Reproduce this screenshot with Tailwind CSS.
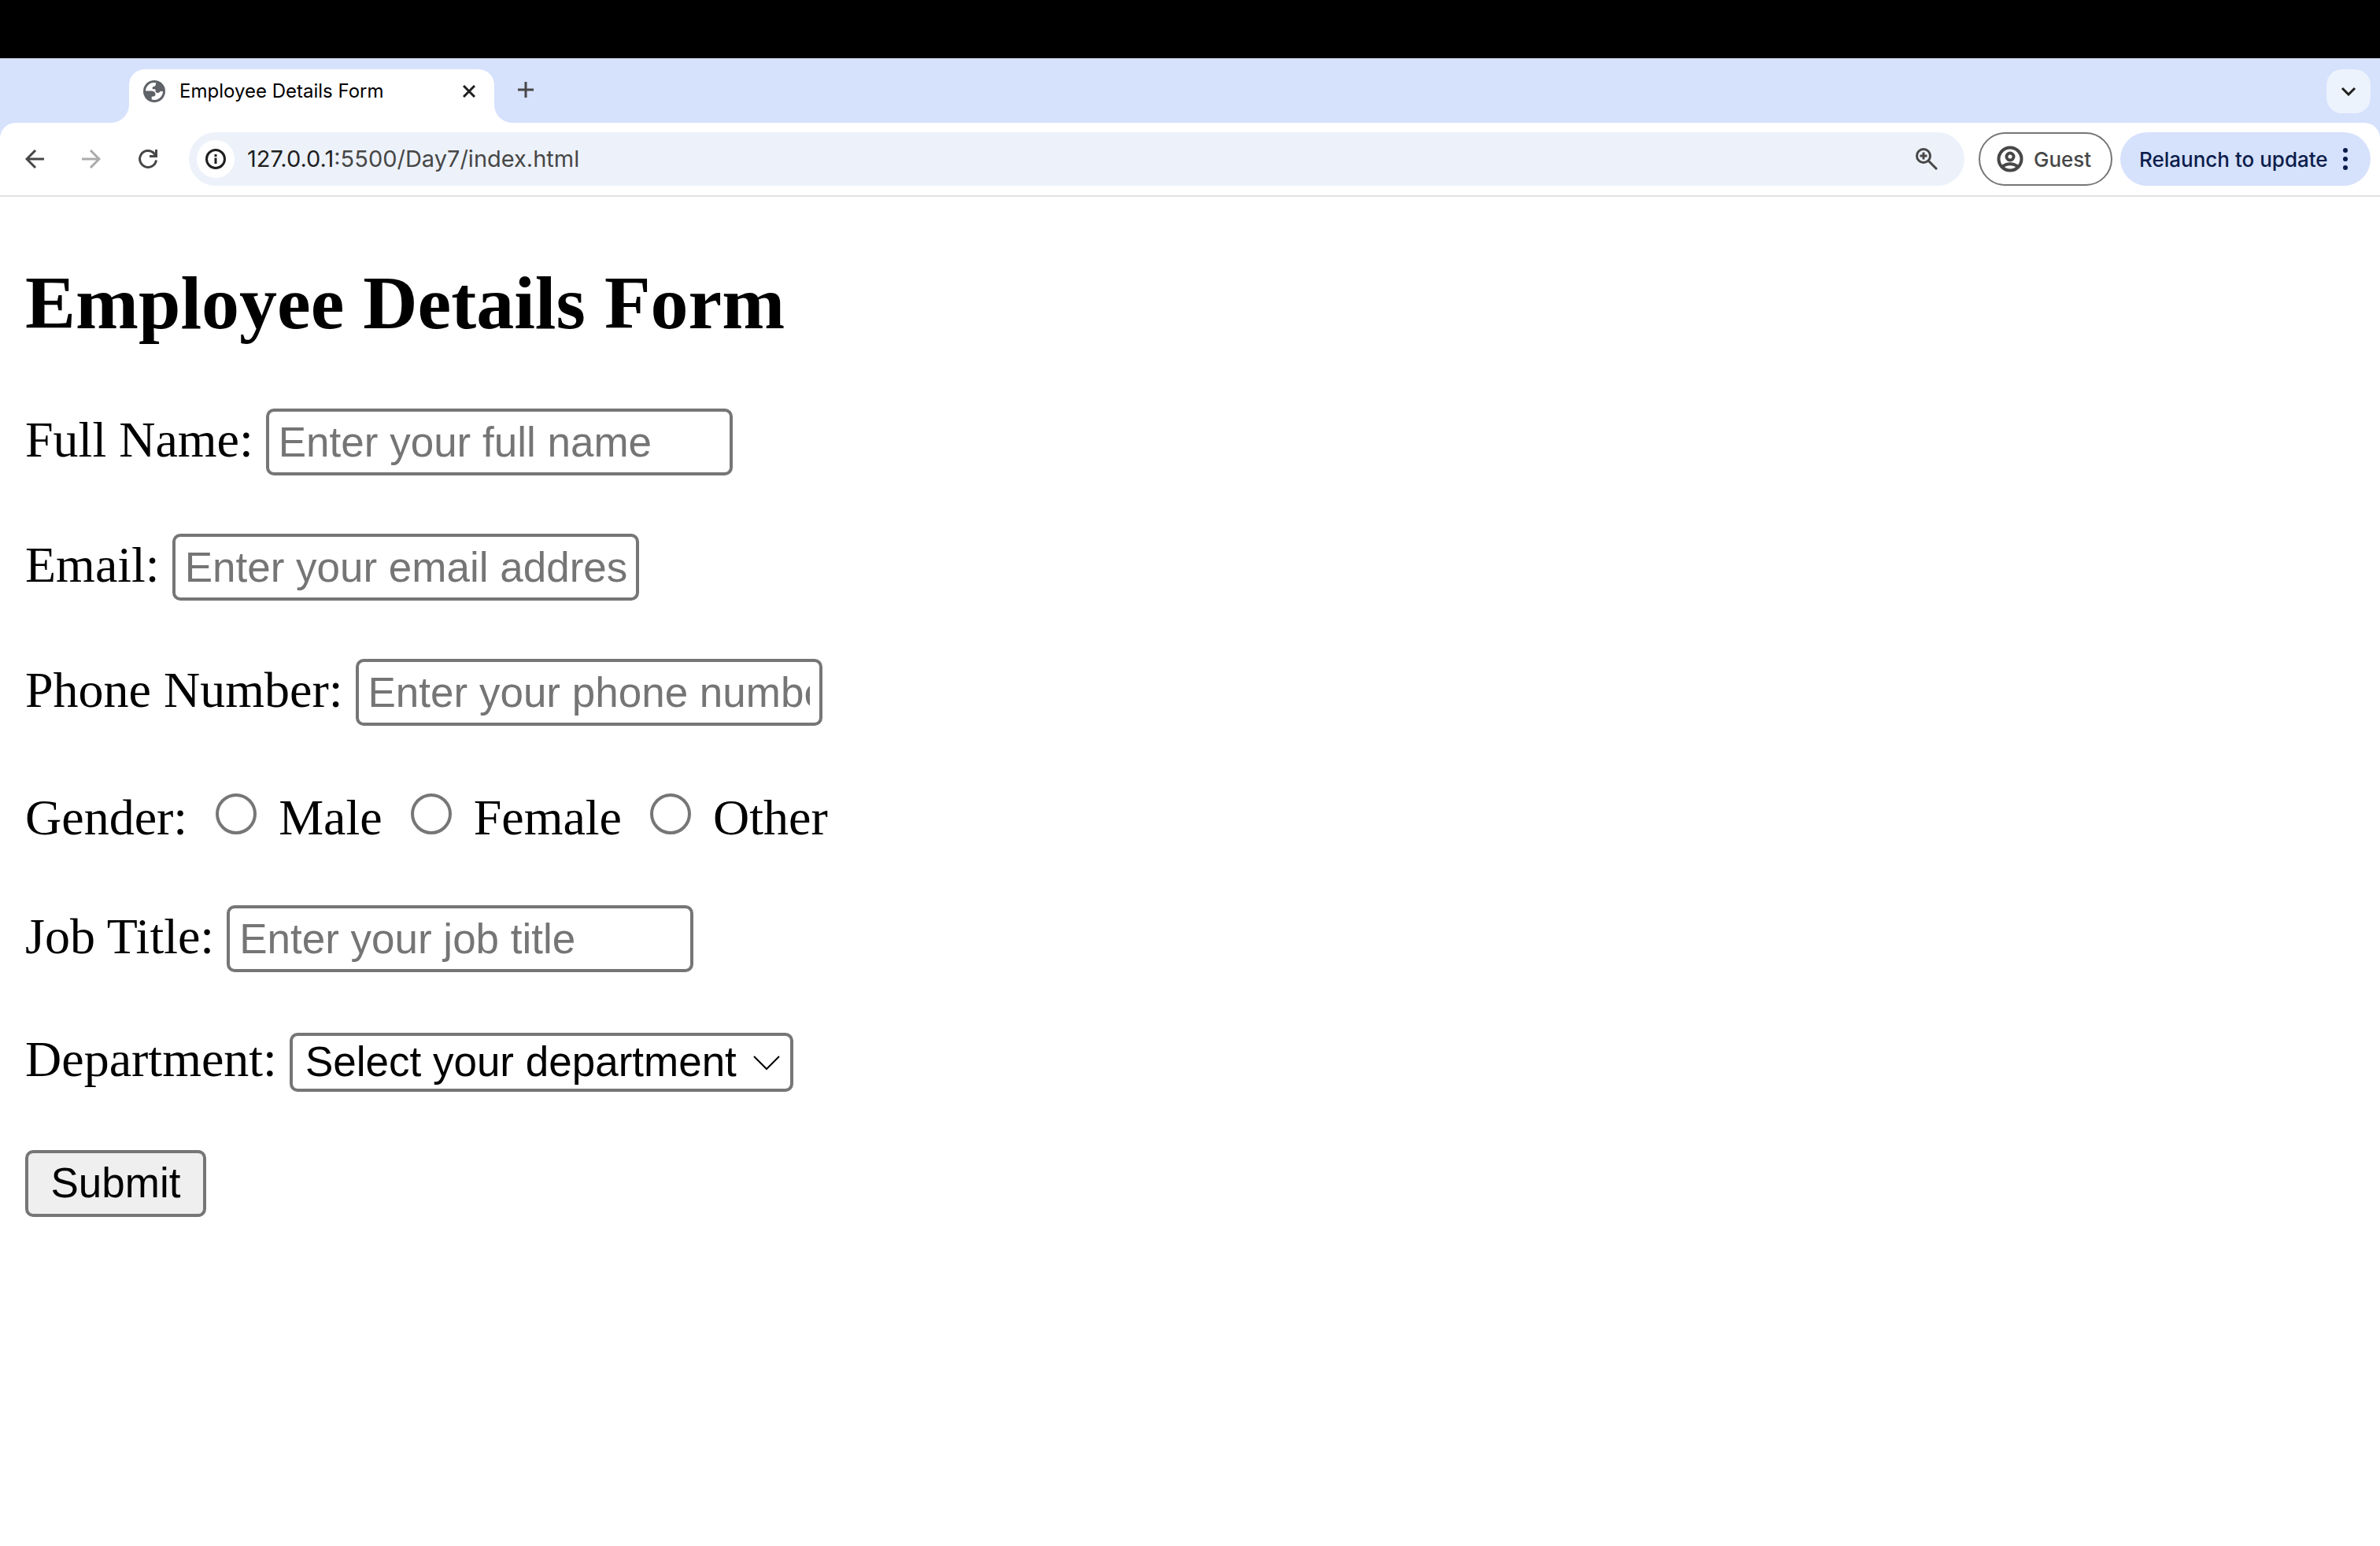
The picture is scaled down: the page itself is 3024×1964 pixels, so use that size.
<!DOCTYPE html>
<html lang="en">
<head>
<meta charset="utf-8">
<title>Employee Details Form</title>
<script src="https://cdn.jsdelivr.net/npm/@tailwindcss/browser@4"></script>
</head>
<body class="bg-white text-black">
<div class="flex min-h-screen flex-col">
  <div class="h-[74px] bg-black"></div>

  <header class="bg-[#d6e1fc] font-['Inter',sans-serif]">
    <div class="flex h-[82px] items-end pl-[140px] pr-3">
      <svg class="size-6 shrink-0" viewBox="0 0 24 24" fill="#fff" aria-hidden="true"><path d="M24 0v24H0C14 24 24 14 24 0z"/></svg>
      <div class="flex h-[68px] w-[464px] items-center rounded-t-[20px] bg-white pb-3 pl-4 pr-4">
        <svg class="size-8 shrink-0" viewBox="0 0 32 32" aria-hidden="true"><circle cx="16" cy="16" r="14" fill="#5f6368"/><path fill="#fff" d="M5 15.500C5.300 10 9.500 5.500 15 5h3v1.500c0 2.500-1.500 3.500-3.300 3.500l-1 1v2.300h3.200c.6 0 .6 1 .6 2.200 0 1.700 1.300 2.500 2.700 2.500 2 0 3-.8 3.300-2H27c0 6-5 11-11 11-1.200 0-2.300-.2-3.300-.5v-3.800c3.300 0 4.800-.6 4.800-2.700 0-2.800-1.500-4.200-4.500-4.500z"/></svg>
        <span class="ml-4 flex-1 text-2xl">Employee Details Form</span>
        <button class="flex size-8 items-center justify-center" aria-label="Close tab"><svg class="size-4" viewBox="0 0 16 16" fill="none" stroke="#1f1f1f" stroke-width="3"><path d="M1 1l14 14M15 1L1 15"/></svg></button>
      </div>
      <svg class="size-6 shrink-0" viewBox="0 0 24 24" fill="#fff" aria-hidden="true"><path d="M0 0v24h24C10 24 0 14 0 0z"/></svg>
      <button class="mb-[26px] flex size-8 items-center justify-center" aria-label="New tab"><svg class="size-5" viewBox="0 0 20 20" fill="none" stroke="#474747" stroke-width="3"><path d="M10 0v20M0 10h20"/></svg></button>
      <button class="mb-3 ml-auto flex size-14 items-center justify-center rounded-[20px] bg-[#ecf3fd]" aria-label="Search tabs"><svg class="h-3 w-5" viewBox="0 0 20 12" fill="none" stroke="#1f1f1f" stroke-width="3"><path d="M2 2l8 8 8-8"/></svg></button>
    </div>

    <nav class="flex h-[94px] items-center rounded-t-[20px] border-b-2 border-[#e1e3e1] bg-white pl-7 pr-3 text-[#474747]">
      <button class="flex size-8 items-center justify-center" aria-label="Back"><svg class="size-6" viewBox="0 0 24 24" fill="none" stroke="#474747" stroke-width="3"><path d="M24 12H2M13 1L2 12l11 11"/></svg></button>
      <button class="ml-10 flex size-8 items-center justify-center" aria-label="Forward" disabled><svg class="size-6" viewBox="0 0 24 24" fill="none" stroke="#ababab" stroke-width="3"><path d="M0 12h22M11 1l11 11-11 11"/></svg></button>
      <button class="ml-10 flex size-8 items-center justify-center" aria-label="Reload"><svg class="size-6" viewBox="0 0 24 24" fill="none" stroke="#474747" stroke-width="3"><path d="M22.500 13.500A10.500 10.500 0 1 1 19 4l3 4"/><path d="M22.500 0v8.500H14"/></svg></button>
      <div class="ml-9 flex h-[68px] flex-1 items-center rounded-full bg-[#edf2fa] pl-[10px] pr-8">
        <button class="flex size-12 items-center justify-center rounded-full bg-white" aria-label="View site information"><svg class="size-7" viewBox="0 0 28 28" fill="none" stroke="#1f1f1f" stroke-width="3"><circle cx="14" cy="14" r="11.500"/><path d="M14 12.500V20M14 8v3"/></svg></button>
        <a href="#" class="ml-4 text-[29px]"><span class="text-[#1f1f1f]">127.0.0.1</span>:5500/Day7/index.html</a>
        <button class="ml-auto flex size-8 items-center justify-center" aria-label="Zoom"><svg class="size-7" viewBox="0 0 28 28" fill="none" stroke="#474747" stroke-width="3"><circle cx="10" cy="10" r="8.500"/><path d="M16 16l11 11M10 5.500v9M5.500 10h9"/></svg></button>
      </div>
      <button class="ml-[18px] flex h-[68px] w-[170px] items-center rounded-full border-2 border-[#747775] pl-5 text-[26px] font-medium"><svg class="mr-3 size-9" viewBox="0 0 36 36" fill="none" stroke="#474747" stroke-width="4"><circle cx="18" cy="18" r="14.500"/><circle cx="18" cy="15" r="4.500"/><path d="M8.500 27.500c5-4.500 14-4.500 19 0"/></svg>Guest</button>
      <button class="ml-[10px] flex h-[68px] w-[318px] items-center justify-between rounded-full bg-[#d6e1fc] pl-6 pr-7 text-[26px] font-medium text-[#0b1c4b]">Relaunch to update<svg class="h-7 w-2" viewBox="0 0 8 28" fill="#0b1c4b"><circle cx="4" cy="3" r="3"/><circle cx="4" cy="14" r="3"/><circle cx="4" cy="25" r="3"/></svg></button>
    </nav>
  </header>

  <main class="flex-1 px-8 pt-20 font-['Liberation_Serif',serif] text-[64px] leading-[74px]">
    <h2 class="text-[96px] leading-[110px] font-bold">Employee Details Form</h2>
    <form class="mt-[79px] flex flex-col gap-[74px]">
      <div class="flex items-baseline gap-4">
        <label for="name">Full Name:</label>
        <input id="name" type="text" placeholder="Enter your full name" class="h-[85px] w-[593px] rounded-[10px] border-4 border-[#767676] px-3 font-['Liberation_Sans',sans-serif] text-[53px] placeholder:text-[#757575]">
      </div>
      <div class="flex items-baseline gap-4">
        <label for="email">Email:</label>
        <input id="email" type="email" placeholder="Enter your email address" class="h-[85px] w-[593px] rounded-[10px] border-4 border-[#767676] px-3 font-['Liberation_Sans',sans-serif] text-[53px] placeholder:text-[#757575]">
      </div>
      <div class="flex items-baseline gap-4">
        <label for="phone">Phone Number:</label>
        <input id="phone" type="tel" placeholder="Enter your phone number" class="h-[85px] w-[593px] rounded-[10px] border-4 border-[#767676] px-3 font-['Liberation_Sans',sans-serif] text-[53px] placeholder:text-[#757575]">
      </div>
      <div class="flex h-20 items-baseline gap-9" role="radiogroup" aria-labelledby="gender">
        <span id="gender">Gender:</span>
        <label class="flex items-baseline gap-7"><input type="radio" name="gender" value="male" class="mt-3 size-[52px] appearance-none rounded-full border-4 border-[#767676]">Male</label>
        <label class="flex items-baseline gap-7"><input type="radio" name="gender" value="female" class="mt-3 size-[52px] appearance-none rounded-full border-4 border-[#767676]">Female</label>
        <label class="flex items-baseline gap-7"><input type="radio" name="gender" value="other" class="mt-3 size-[52px] appearance-none rounded-full border-4 border-[#767676]">Other</label>
      </div>
      <div class="flex items-baseline gap-4">
        <label for="job">Job Title:</label>
        <input id="job" type="text" placeholder="Enter your job title" class="h-[85px] w-[593px] rounded-[10px] border-4 border-[#767676] px-3 font-['Liberation_Sans',sans-serif] text-[53px] placeholder:text-[#757575]">
      </div>
      <div class="flex items-baseline gap-4">
        <label for="department">Department:</label>
        <div class="relative flex items-baseline">
          <select id="department" class="h-[75px] w-[640px] appearance-none rounded-[10px] border-4 border-[#767676] bg-white pl-4 font-['Liberation_Sans',sans-serif] text-[53px] leading-[60px]">
            <option>Select your department</option>
          </select>
          <svg class="pointer-events-none absolute right-4 top-7 h-5 w-9" viewBox="0 0 36 20" fill="none" stroke="#000" stroke-width="2" aria-hidden="true"><path d="M2 2l16 16L34 2"/></svg>
        </div>
      </div>
      <button type="button" class="h-[85px] w-[230px] rounded-[10px] border-4 border-[#767676] bg-[#efefef] font-['Liberation_Sans',sans-serif] text-[53px] leading-[60px]">Submit</button>
    </form>
  </main>
</div>
</body>
</html>
